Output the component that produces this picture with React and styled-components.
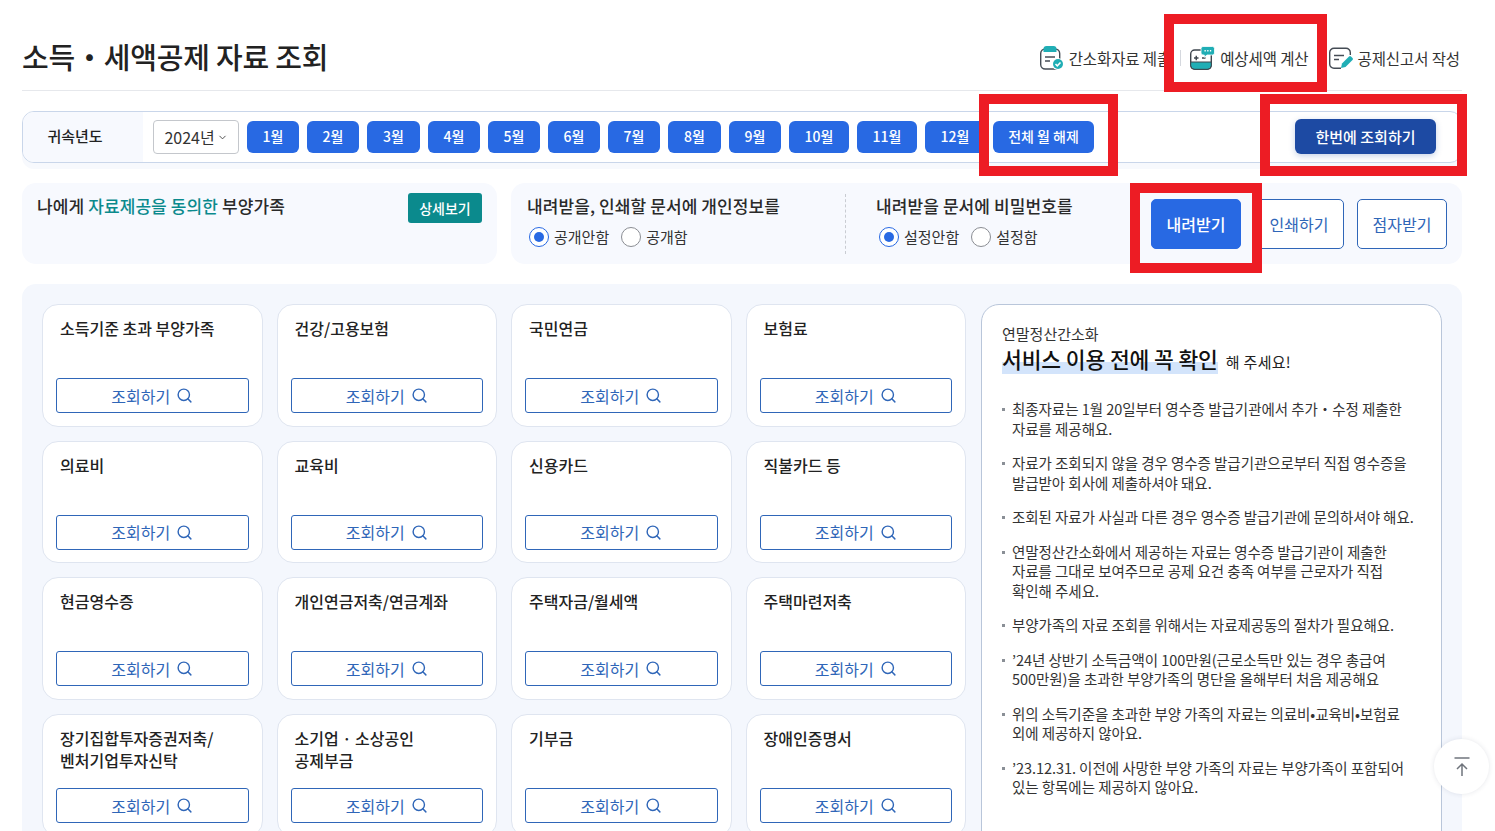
import React from "react";
import styled, { createGlobalStyle } from "styled-components";
import { Search, ChevronDown } from "lucide-react";

const GlobalStyle = createGlobalStyle`
  html, body {
    margin: 0;
    padding: 0;
    height: 831px;
    overflow: hidden;
    background: #fff;
  }
  #root { height: 831px; overflow: hidden; }
  * { box-sizing: border-box; }
  body {
    font-family: "Noto Sans CJK KR", "Noto Sans", sans-serif;
    color: #222;
  }
`;

const Page = styled.div`
  position: relative;
  width: 1495px;
  height: 831px;
  overflow: hidden;
  padding: 0 33px 0 22px;
`;
const Header = styled.header`
  display: flex;
  align-items: center;
  justify-content: space-between;
  height: 91px;
  padding-top: 22px;
  border-bottom: 1px solid #e6e8ec;
`;
const Title = styled.h1`
  margin: 0;
  font-size: 29px;
  font-weight: 500;
  letter-spacing: -0.2px;
  color: #222;
`;
const HeaderLinks = styled.nav`
  display: flex;
  align-items: center;
  padding-top: 4px;
  padding-right: 2px;
`;
const HeaderLink = styled.a`
  display: flex;
  align-items: center;
  gap: 5px;
  font-size: 15.5px;
  letter-spacing: -0.1px;
  color: #333;
  white-space: nowrap;
  margin-left: ${(p) => p.$gap || 0}px;
`;
const LinkDivider = styled.span`
  width: 1px;
  height: 16px;
  background: #d5d8de;
  margin-left: 9px;
  margin-right: 9px;
`;

const YearBar = styled.section`
  display: flex;
  align-items: center;
  height: 52px;
  margin-top: 20px;
  border: 1px solid #c9d6ea;
  border-radius: 12px;
  background: #fff;
  box-shadow: 0 6px 0 #f7f9fd;
  overflow: hidden;
`;
const YearLabel = styled.div`
  display: flex;
  align-items: center;
  justify-content: center;
  align-self: stretch;
  width: 120px;
  padding: 0 16px 4px 0;
  background: #f7f9fe;
  font-size: 15px;
  font-weight: 500;
`;
const YearSelect = styled.div`
  display: flex;
  align-items: center;
  justify-content: center;
  gap: 2px;
  width: 86px;
  height: 34px;
  margin-left: 10px;
  margin-right: 8px;
  border: 1px solid #c4c7cc;
  border-radius: 4px;
  font-size: 16px;
  color: #333;
`;
const MonthList = styled.div`
  display: flex;
  gap: 8px;
`;
const MonthButton = styled.button`
  width: ${(p) => p.$w}px;
  height: 32px;
  padding: 0 0 2px;
  border: 0;
  border-radius: 6px;
  background: #2869e3;
  color: #fff;
  font-family: inherit;
  font-size: 14px;
  font-weight: 500;
`;
const QueryAllButton = styled.button`
  width: 141px;
  height: 35px;
  margin-left: auto;
  margin-right: 25px;
  margin-bottom: 2px;
  padding: 0;
  border: 0;
  border-radius: 6px;
  background: #1d4aa3;
  box-shadow: 0 2px 6px rgba(29, 74, 163, 0.25);
  color: #fff;
  font-family: inherit;
  font-size: 15px;
  font-weight: 500;
`;

const OptionRow = styled.section`
  display: flex;
  gap: 14px;
  margin-top: 20px;
`;
const Panel = styled.div`
  height: 81px;
  border-radius: 14px;
  background: #f7f9fe;
`;
const FamilyPanel = styled(Panel)`
  display: flex;
  justify-content: space-between;
  align-items: flex-start;
  width: 475px;
  padding: 10px 15px;
`;
const PanelTitle = styled.div`
  font-size: 17px;
  font-weight: 500;
  line-height: 26px;
  letter-spacing: 0.1px;
  color: #2a2a2a;
`;
const Teal = styled.span`
  color: #0b8a8d;
`;
const DetailButton = styled.button`
  width: 74px;
  height: 30px;
  padding: 0;
  border: 0;
  border-radius: 3px;
  background: #0b8a8d;
  color: #fff;
  font-family: inherit;
  font-size: 14px;
  font-weight: 500;
`;
const DocPanel = styled(Panel)`
  display: flex;
  align-items: center;
  flex: 1;
  padding: 0 15px 0 16px;
`;
const DocOption = styled.div`
  width: ${(p) => p.$w}px;
  align-self: flex-start;
  padding-top: 10px;
`;
const RadioRow = styled.div`
  display: flex;
  align-items: center;
  gap: 12px;
  margin-top: 8px;
  margin-left: ${(p) => p.$inset}px;
`;
const RadioLabel = styled.label`
  display: flex;
  align-items: center;
  gap: 5px;
  font-size: 15px;
  line-height: 20px;
  color: #333;
`;
const RadioDot = styled.span`
  position: relative;
  width: 20px;
  height: 20px;
  border-radius: 50%;
  background: #fff;
  border: 1px solid ${(p) => (p.$on ? "#2869e3" : "#8a8d93")};
  &::after {
    content: "";
    display: ${(p) => (p.$on ? "block" : "none")};
    position: absolute;
    inset: 4px;
    border-radius: 50%;
    background: #2869e3;
  }
`;
const DashDivider = styled.span`
  width: 0;
  height: 60px;
  margin-right: 30px;
  border-left: 1px dashed #c9ccd2;
`;
const ActionGroup = styled.div`
  display: flex;
  gap: 13px;
  margin-left: auto;
`;
const ActionButton = styled.button`
  width: 90px;
  height: 50px;
  padding: 0;
  border: 1px solid #2f66b8;
  border-radius: 5px;
  background: ${(p) => (p.$primary ? "#2869e3" : "#fff")};
  border-color: ${(p) => (p.$primary ? "#2869e3" : "#2f66b8")};
  color: ${(p) => (p.$primary ? "#fff" : "#2f66b8")};
  font-family: inherit;
  font-size: 16px;
  font-weight: ${(p) => (p.$primary ? 500 : 400)};
`;

const MainPanel = styled.main`
  display: flex;
  gap: 15px;
  height: 560px;
  margin-top: 20px;
  padding: 20px 20px 0;
  border-radius: 14px 14px 0 0;
  background: #f4f7fd;
`;
const CardGrid = styled.div`
  display: grid;
  grid-template-columns: repeat(4, 1fr);
  grid-auto-rows: 122.67px;
  gap: 14px;
  width: 924px;
  flex: none;
`;
const Card = styled.article`
  display: flex;
  flex-direction: column;
  justify-content: space-between;
  padding: 12px 13px 12.6px;
  border: 1px solid #dfe5f0;
  border-radius: 16px;
  background: #fff;
`;
const CardTitle = styled.h3`
  margin: 0;
  padding-left: 4px;
  font-size: 16px;
  font-weight: 500;
  line-height: 22px;
  white-space: pre-line;
  color: #222;
`;
const QueryButton = styled.button`
  display: flex;
  align-items: center;
  justify-content: center;
  gap: 6px;
  width: 100%;
  height: 35px;
  flex: none;
  padding: 0;
  border: 1px solid #2f66b8;
  border-radius: 3px;
  background: #fff;
  color: #2f66b8;
  font-family: inherit;
  font-size: 16px;
`;

const InfoCard = styled.aside`
  flex: 1;
  height: 560px;
  padding: 19px 20px 0;
  border: 1px solid #b9c6da;
  border-radius: 18px;
  background: #fff;
`;
const InfoEyebrow = styled.div`
  font-size: 15px;
  line-height: 20px;
  color: #333;
`;
const InfoHeading = styled.div`
  display: flex;
  align-items: baseline;
  gap: 8px;
  font-size: 15px;
  letter-spacing: 0.3px;
  line-height: 30px;
`;
const Marked = styled.strong`
  font-size: 21.5px;
  font-weight: 500;
  letter-spacing: -0.1px;
  color: #111;
  background: linear-gradient(transparent 60%, #d3e4fb 60%);
`;
const InfoList = styled.ul`
  display: flex;
  flex-direction: column;
  gap: 15px;
  margin: 22px 0 0;
  padding: 0;
  list-style: none;
`;
const InfoItem = styled.li`
  position: relative;
  padding-left: 10px;
  font-size: 14.5px;
  line-height: 19.5px;
  letter-spacing: -0.05px;
  color: #333;
  white-space: pre-line;
  &::before {
    content: "";
    position: absolute;
    left: 0;
    top: 9px;
    width: 3px;
    height: 3px;
    background: #8a8f96;
  }
`;

const TopButton = styled.button`
  position: absolute;
  left: 1434px;
  top: 739px;
  display: flex;
  align-items: center;
  justify-content: center;
  width: 55px;
  height: 55px;
  padding: 0;
  border: 0;
  border-radius: 50%;
  background: #fff;
  box-shadow: 0 0 5px rgba(40, 50, 80, 0.12);
`;
/* red review marks that sit on top of the captured page */
const RedMark = styled.div`
  position: absolute;
  border: 10px solid #ed1c24;
  pointer-events: none;
  left: ${(p) => p.$x}px;
  top: ${(p) => p.$y}px;
  width: ${(p) => p.$w}px;
  height: ${(p) => p.$h}px;
`;

const SubmitIcon = () => (
  <svg width="24" height="24" viewBox="0 0 24 24" fill="none">
    <rect x="0.700" y="3" width="19" height="20" rx="4.500" fill="#fff" stroke="#454c55" strokeWidth="1.400" />
    <path d="M3.500 6V3a3 3 0 0 1 3-3h7a3 3 0 0 1 3 3v3z" fill="#20aeb5" />
    <path d="M5 11h10M5 15h5" stroke="#454c55" strokeWidth="1.400" />
    <circle cx="18" cy="18" r="6" fill="#fff" />
    <circle cx="18" cy="18" r="5" fill="#20aeb5" />
    <path d="M15.500 18l1.800 1.800 3.200-3.400" stroke="#fff" strokeWidth="1.500" />
  </svg>
);
const CalcIcon = () => (
  <svg width="25" height="24" viewBox="0 0 25 24" fill="none">
    <rect x="0.700" y="4" width="20.600" height="19.300" rx="4" fill="#fff" stroke="#3e454d" strokeWidth="1.400" />
    <path d="M0.700 16h20.600v3.300a4 4 0 0 1-4 4H4.700a4 4 0 0 1-4-4z" fill="#20aeb5" stroke="#3e454d" strokeWidth="1" />
    <path d="M4 12h4.500M6.250 9.800v4.400M12 12h3.500" stroke="#3e454d" strokeWidth="1.400" />
    <path d="M13 0.500h9.500a2 2 0 0 1 2 2v4.500a2 2 0 0 1-2 2H17l-2.700 2.300V9H13a2 2 0 0 1-2-2V2.500a2 2 0 0 1 2-2z" fill="#20aeb5" stroke="#fff" strokeWidth="0.800" />
    <path d="M14.500 4.800h1.300M17.200 4.800h1.300M19.900 4.800h1.300" stroke="#fff" strokeWidth="1.400" />
  </svg>
);
const WriteIcon = () => (
  <svg width="24" height="24" viewBox="0 0 24 24" fill="none">
    <path d="M12 22.300H5a4.300 4.300 0 0 1-4.300-4.300V6.500A4.300 4.300 0 0 1 5 2.200h12a4.300 4.300 0 0 1 4.300 4.300V9" stroke="#454c55" strokeWidth="1.400" />
    <path d="M5 9.500h10M5 13.500h5" stroke="#454c55" strokeWidth="1.400" />
    <path d="M13 17.500l7-7a1.500 1.500 0 0 1 2 0l1.500 1.500a1.500 1.500 0 0 1 0 2l-7 7-4.500 1z" fill="#20aeb5" />
  </svg>
);
const TopIcon = () => (
  <svg width="16" height="20" viewBox="0 0 16 20" fill="none" stroke="#6f747c" strokeWidth="1.500">
    <path d="M0.500 1h15" />
    <path d="M8 19V7M3 12l5-5 5 5" />
  </svg>
);

const MONTHS = [
  ["1월", 52], ["2월", 52], ["3월", 53], ["4월", 52], ["5월", 52], ["6월", 52],
  ["7월", 52], ["8월", 53], ["9월", 52], ["10월", 60], ["11월", 60], ["12월", 60],
  ["전체 월 해제", 101],
];

const CARDS = [
  "소득기준 초과 부양가족", "건강/고용보험", "국민연금", "보험료",
  "의료비", "교육비", "신용카드", "직불카드 등",
  "현금영수증", "개인연금저축/연금계좌", "주택자금/월세액", "주택마련저축",
  "장기집합투자증권저축/\n벤처기업투자신탁", "소기업 · 소상공인\n공제부금", "기부금", "장애인증명서",
];

const NOTES = [
  "최종자료는 1월 20일부터 영수증 발급기관에서 추가・수정 제출한\n자료를 제공해요.",
  "자료가 조회되지 않을 경우 영수증 발급기관으로부터 직접 영수증을\n발급받아 회사에 제출하셔야 돼요.",
  "조회된 자료가 사실과 다른 경우 영수증 발급기관에 문의하셔야 해요.",
  "연말정산간소화에서 제공하는 자료는 영수증 발급기관이 제출한\n자료를 그대로 보여주므로 공제 요건 충족 여부를 근로자가 직접\n확인해 주세요.",
  "부양가족의 자료 조회를 위해서는 자료제공동의 절차가 필요해요.",
  "’24년 상반기 소득금액이 100만원(근로소득만 있는 경우 총급여\n500만원)을 초과한 부양가족의 명단을 올해부터 처음 제공해요",
  "위의 소득기준을 초과한 부양 가족의 자료는 의료비•교육비•보험료\n외에 제공하지 않아요.",
  "’23.12.31. 이전에 사망한 부양 가족의 자료는 부양가족이 포함되어\n있는 항목에는 제공하지 않아요.",
];

const App = () => (
  <Page>
    <GlobalStyle />
    <Header>
      <Title>소득・세액공제 자료 조회</Title>
      <HeaderLinks>
        <HeaderLink><SubmitIcon />간소화자료 제출</HeaderLink>
        <LinkDivider />
        <HeaderLink><CalcIcon />예상세액 계산</HeaderLink>
        <HeaderLink $gap={20}><WriteIcon />공제신고서 작성</HeaderLink>
      </HeaderLinks>
    </Header>

    <YearBar>
      <YearLabel>귀속년도</YearLabel>
      <YearSelect>2024년<ChevronDown size={11} color="#444" /></YearSelect>
      <MonthList>
        {MONTHS.map(([label, w]) => (
          <MonthButton key={label} $w={w}>{label}</MonthButton>
        ))}
      </MonthList>
      <QueryAllButton>한번에 조회하기</QueryAllButton>
    </YearBar>

    <OptionRow>
      <FamilyPanel>
        <PanelTitle>나에게 <Teal>자료제공을 동의한</Teal> 부양가족</PanelTitle>
        <DetailButton>상세보기</DetailButton>
      </FamilyPanel>
      <DocPanel>
        <DocOption $w={318}>
          <PanelTitle>내려받을, 인쇄할 문서에 개인정보를</PanelTitle>
          <RadioRow $inset={2}>
            <RadioLabel><RadioDot $on />공개안함</RadioLabel>
            <RadioLabel><RadioDot />공개함</RadioLabel>
          </RadioRow>
        </DocOption>
        <DashDivider />
        <DocOption $w={240}>
          <PanelTitle>내려받을 문서에 비밀번호를</PanelTitle>
          <RadioRow $inset={3}>
            <RadioLabel><RadioDot $on />설정안함</RadioLabel>
            <RadioLabel><RadioDot />설정함</RadioLabel>
          </RadioRow>
        </DocOption>
        <ActionGroup>
          <ActionButton $primary>내려받기</ActionButton>
          <ActionButton>인쇄하기</ActionButton>
          <ActionButton>점자받기</ActionButton>
        </ActionGroup>
      </DocPanel>
    </OptionRow>

    <MainPanel>
      <CardGrid>
        {CARDS.map((name) => (
          <Card key={name}>
            <CardTitle>{name}</CardTitle>
            <QueryButton>조회하기<Search size={17} strokeWidth={2} /></QueryButton>
          </Card>
        ))}
      </CardGrid>
      <InfoCard>
        <InfoEyebrow>연말정산간소화</InfoEyebrow>
        <InfoHeading>
          <Marked>서비스 이용 전에 꼭 확인</Marked>
          <span>해 주세요!</span>
        </InfoHeading>
        <InfoList>
          {NOTES.map((note) => (
            <InfoItem key={note}>{note}</InfoItem>
          ))}
        </InfoList>
      </InfoCard>
    </MainPanel>

    <TopButton><TopIcon /></TopButton>

    <RedMark $x={1164} $y={14} $w={163} $h={78} />
    <RedMark $x={979} $y={94} $w={139} $h={82} />
    <RedMark $x={1260} $y={94} $w={207} $h={82} />
    <RedMark $x={1130} $y={183} $w={132} $h={90} />
  </Page>
);

export default App;
